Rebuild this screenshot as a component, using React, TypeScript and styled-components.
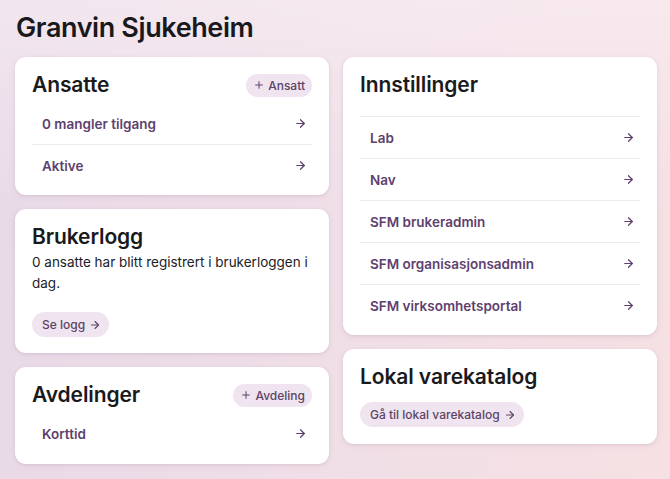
import React from "react";
import styled, { createGlobalStyle } from "styled-components";

const Global = createGlobalStyle`
  html, body { margin: 0; padding: 0; height: 100%; }
  body {
    font-family: Inter, "Noto Sans", sans-serif;
    background:
      linear-gradient(180deg, rgba(249, 239, 244, 0.6) 0%, rgba(249, 239, 244, 0) 45%),
      linear-gradient(100deg, #e8d9e7 0%, #f0dfe7 55%, #f6e0e3 100%);
    color: #1b1b1f;
  }
  #root { min-height: 100vh; }
`;

const Page = styled.div`
  padding: 12px 13px 16px 15px;
  box-sizing: border-box;
  min-height: 100vh;
`;

const Title = styled.h1`
  margin: 0 0 13px 1px;
  font-size: 27px;
  line-height: 32px;
  font-weight: 600;
  letter-spacing: -0.4px;
  color: #19191c;
`;

const Columns = styled.div`
  display: grid;
  grid-template-columns: 1fr 1fr;
  column-gap: 14px;
  align-items: start;
`;

const Column = styled.div`
  display: flex;
  flex-direction: column;
  gap: 14px;
`;

const Card = styled.section<{ $pb?: number }>`
  background: #ffffff;
  border-radius: 11px;
  padding: 16px 17px ${(p) => p.$pb ?? 16}px;
  box-shadow: 0 1px 3px rgba(90, 50, 90, 0.1), 0 2px 8px rgba(90, 50, 90, 0.05);
`;

const CardHeader = styled.div<{ $mb: number }>`
  display: flex;
  align-items: center;
  justify-content: space-between;
  margin-bottom: ${(p) => p.$mb}px;
`;

const CardTitle = styled.h2`
  margin: 0;
  font-size: 21px;
  line-height: 24px;
  font-weight: 600;
  letter-spacing: -0.1px;
  color: #1a1a1d;
`;

const Pill = styled.button`
  display: inline-flex;
  align-items: center;
  gap: 4px;
  height: 25px;
  padding: 0 8px 0 10px;
  border: none;
  border-radius: 13px;
  background: #f0e4f0;
  color: #5a4466;
  font-family: inherit;
  font-size: 12px;
  font-weight: 500;
  cursor: pointer;
`;

const SmallPill = styled(Pill)`
  height: 23px;
  gap: 4px;
  padding: 0 7px 0 8px;
`;

const List = styled.ul<{ $topBorder?: boolean }>`
  list-style: none;
  margin: 0;
  padding: 0;
  & > li + li { border-top: 1px solid #efe9f1; }
  ${(p) => (p.$topBorder ? "& > li:first-child { border-top: 1px solid #efe9f1; }" : "")}
`;

const Row = styled.li`
  display: flex;
  align-items: center;
  justify-content: space-between;
  height: 41px;
  padding: 0 5px 0 10px;
  color: #5e3f6e;
  font-size: 13.5px;
  font-weight: 600;
`;

const Text = styled.p`
  margin: 3px 0 18px;
  font-size: 13.5px;
  line-height: 21px;
  color: #222226;
`;

const Arrow = ({ size = 13 }: { size?: number }) => (
  <svg width={size} height={size} viewBox="0 0 24 24" fill="none" stroke="currentColor" strokeWidth={2.2} strokeLinecap="round" strokeLinejoin="round">
    <path d="M5 12h14" />
    <path d="m12 5 7 7-7 7" />
  </svg>
);

const Plus = () => (
  <svg width={10} height={10} viewBox="0 0 24 24" fill="none" stroke="currentColor" strokeWidth={2.4} strokeLinecap="round">
    <path d="M12 4v16M4 12h16" />
  </svg>
);

const LinkRow = ({ label }: { label: string }) => (
  <Row>
    <span>{label}</span>
    <Arrow />
  </Row>
);

export default function App() {
  return (
    <>
      <Global />
      <Page>
        <Title>Granvin Sjukeheim</Title>
        <Columns>
          <Column>
            <Card $pb={9}>
              <CardHeader $mb={6}>
                <CardTitle>Ansatte</CardTitle>
                <SmallPill>
                  <Plus />
                  Ansatt
                </SmallPill>
              </CardHeader>
              <List>
                <LinkRow label="0 mangler tilgang" />
                <LinkRow label="Aktive" />
              </List>
            </Card>
            <Card>
              <CardHeader $mb={0}>
                <CardTitle>Brukerlogg</CardTitle>
              </CardHeader>
              <Text>0 ansatte har blitt registrert i brukerloggen i dag.</Text>
              <Pill>
                Se logg
                <Arrow size={12} />
              </Pill>
            </Card>
            <Card $pb={10}>
              <CardHeader $mb={6}>
                <CardTitle>Avdelinger</CardTitle>
                <SmallPill>
                  <Plus />
                  Avdeling
                </SmallPill>
              </CardHeader>
              <List>
                <LinkRow label="Korttid" />
              </List>
            </Card>
          </Column>
          <Column>
            <Card $pb={9}>
              <CardHeader $mb={19}>
                <CardTitle>Innstillinger</CardTitle>
              </CardHeader>
              <List $topBorder>
                <LinkRow label="Lab" />
                <LinkRow label="Nav" />
                <LinkRow label="SFM brukeradmin" />
                <LinkRow label="SFM organisasjonsadmin" />
                <LinkRow label="SFM virksomhetsportal" />
              </List>
            </Card>
            <Card $pb={17}>
              <CardHeader $mb={13}>
                <CardTitle>Lokal varekatalog</CardTitle>
              </CardHeader>
              <Pill>
                Gå til lokal varekatalog
                <Arrow size={12} />
              </Pill>
            </Card>
          </Column>
        </Columns>
      </Page>
    </>
  );
}
